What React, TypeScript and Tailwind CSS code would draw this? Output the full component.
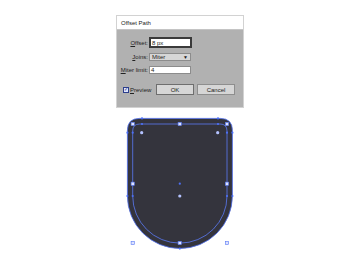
import React from 'react';

const font = { fontFamily: '"Liberation Sans", Arial, sans-serif' };

function U({ c }: { c: string }) {
  return <span className="underline underline-offset-[1px]">{c}</span>;
}

function Shape() {
  const squares: [number, number][] = [
    [12.7, 10], [59.7, 10], [107, 10],
    [12.7, 69.7], [107, 69.7],
    [12.7, 129], [59.7, 129], [107, 129],
  ];
  const anchors: [number, number][] = [
    [7.4, 18.7], [112.4, 18.7], [22, 4.4], [98, 4.4],
    [7.4, 82], [112.4, 82], [59.8, 134.6],
    [22, 10], [98, 10], [12.7, 18.7], [107, 18.7],
    [12.7, 82], [107, 82], [59.8, 69.7],
  ];
  const widgets: [number, number][] = [
    [21.7, 18.7], [97.7, 18.7], [59.8, 82],
  ];
  return (
    <svg width="120" height="142" viewBox="0 0 120 142">
      <path
        d="M7.4,16.4 Q7.4,4.4 19.4,4.4 H100.4 Q112.4,4.4 112.4,16.4 V82 A52.5,52.5 0 0 1 7.4,82 Z"
        fill="#34343d"
        stroke="#4f6ff0"
        strokeWidth="0.8"
      />
      <path
        d="M12.7,17 Q12.7,10 19.7,10 H100 Q107,10 107,17 V82 A47.15,47.15 0 0 1 12.7,82 Z"
        fill="none"
        stroke="#5a7af5"
        strokeWidth="0.8"
      />
      {anchors.map(([x, y], i) => (
        <circle key={'a' + i} cx={x} cy={y} r="1.1" fill="#4d70f5" />
      ))}
      {widgets.map(([x, y], i) => (
        <circle key={'w' + i} cx={x} cy={y} r="1.6" fill="#b4c2ff" />
      ))}
      {squares.map(([x, y], i) => (
        <rect
          key={'s' + i}
          x={x - 1.6}
          y={y - 1.6}
          width="3.2"
          height="3.2"
          fill="#dde3ff"
          stroke="#5a7af5"
          strokeWidth="0.6"
        />
      ))}
    </svg>
  );
}

export default function App() {
  return (
    <div className="w-[360px] h-[264px] bg-white flex flex-col items-center pt-[15px]" style={font}>
      <div className="w-[128px] border border-[#d2d2d2] text-[#222] text-[6px] leading-none">
        <div className="h-[14px] bg-white flex items-center px-[4px] border-b border-[#c4c4c4]">
          Offset Path
        </div>
        <div className="bg-[#b1b1b1] h-[77px] pt-[7px]">
          <div className="grid grid-cols-[31px_43px] gap-x-[1px] items-center">
            <div className="text-right">
              <U c="O" />ffset:
            </div>
            <div className="h-[11px] bg-white border-[2px] border-[#3a3a3a] flex items-center px-[1px]">
              8 px
            </div>

            <div className="text-right mt-[5px]">
              <U c="J" />oins:
            </div>
            <div className="mt-[5px] h-[8px] w-[42px] bg-[#d6d6d6] border border-[#8c8c8c] flex items-center justify-between px-[2px]">
              <span>Miter</span>
              <span className="text-[5px]">▼</span>
            </div>

            <div className="text-right mt-[5px]">
              <U c="M" />iter limit:
            </div>
            <div className="mt-[5px] h-[8px] w-[42px] bg-white border border-[#8c8c8c] flex items-center px-[1px]">
              4
            </div>
          </div>

          <div className="flex items-center mt-[10px] pl-[6px]">
            <div className="w-[6px] h-[6px] border border-[#2c3e8c] bg-[#dfe6ff] flex items-center justify-center text-[5px] text-[#1b2a6b]">
              ✓
            </div>
            <div className="ml-[1px] w-[26px]">
              <U c="P" />review
            </div>
            <div className="w-[38px] h-[11px] bg-[#d6d6d6] border border-[#6e6e6e] flex items-center justify-center">
              OK
            </div>
            <div className="ml-[3px] w-[38px] h-[11px] bg-[#d6d6d6] border border-[#8e8e8e] flex items-center justify-center">
              Cancel
            </div>
          </div>
        </div>
      </div>
      <div className="mt-[6px]">
        <Shape />
      </div>
    </div>
  );
}
